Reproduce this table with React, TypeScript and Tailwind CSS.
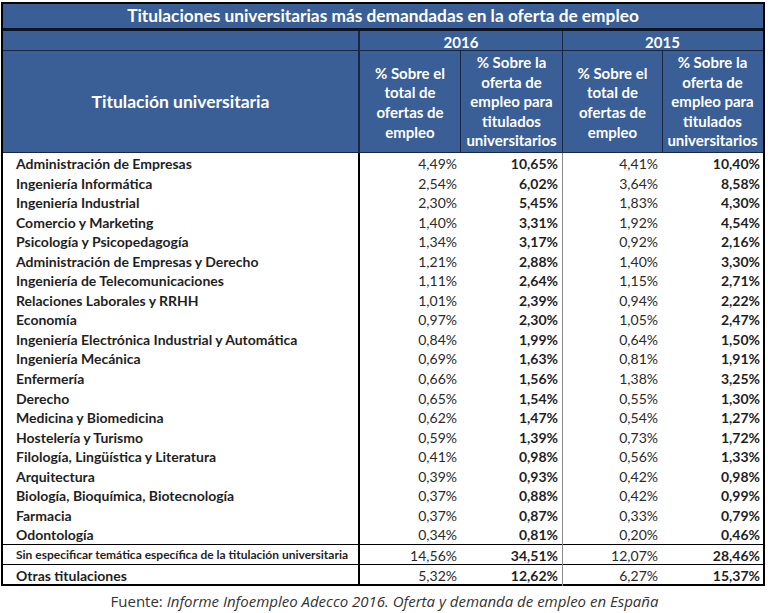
import React from "react";

const rows: [string, string, string, string, string][] = [
  ["Administración de Empresas", "4,49%", "10,65%", "4,41%", "10,40%"],
  ["Ingeniería Informática", "2,54%", "6,02%", "3,64%", "8,58%"],
  ["Ingeniería Industrial", "2,30%", "5,45%", "1,83%", "4,30%"],
  ["Comercio y Marketing", "1,40%", "3,31%", "1,92%", "4,54%"],
  ["Psicología y Psicopedagogía", "1,34%", "3,17%", "0,92%", "2,16%"],
  ["Administración de Empresas y Derecho", "1,21%", "2,88%", "1,40%", "3,30%"],
  ["Ingeniería de Telecomunicaciones", "1,11%", "2,64%", "1,15%", "2,71%"],
  ["Relaciones Laborales y RRHH", "1,01%", "2,39%", "0,94%", "2,22%"],
  ["Economía", "0,97%", "2,30%", "1,05%", "2,47%"],
  ["Ingeniería Electrónica Industrial y Automática", "0,84%", "1,99%", "0,64%", "1,50%"],
  ["Ingeniería Mecánica", "0,69%", "1,63%", "0,81%", "1,91%"],
  ["Enfermería", "0,66%", "1,56%", "1,38%", "3,25%"],
  ["Derecho", "0,65%", "1,54%", "0,55%", "1,30%"],
  ["Medicina y Biomedicina", "0,62%", "1,47%", "0,54%", "1,27%"],
  ["Hostelería y Turismo", "0,59%", "1,39%", "0,73%", "1,72%"],
  ["Filología, Lingüística y Literatura", "0,41%", "0,98%", "0,56%", "1,33%"],
  ["Arquitectura", "0,39%", "0,93%", "0,42%", "0,98%"],
  ["Biología, Bioquímica, Biotecnología", "0,37%", "0,88%", "0,42%", "0,99%"],
  ["Farmacia", "0,37%", "0,87%", "0,33%", "0,79%"],
  ["Odontología", "0,34%", "0,81%", "0,20%", "0,46%"],
];

const font = { fontFamily: "Lato, 'Open Sans', sans-serif" };

function SubHead({ lines }: { lines: string[] }) {
  return (
    <div className="flex flex-col items-center justify-center text-white font-bold text-[15px] leading-[19.6px] text-center h-full">
      {lines.map((l, i) => (
        <span key={i}>{l}</span>
      ))}
    </div>
  );
}

function Nums({ a, b, c, d }: { a: string; b: string; c: string; d: string }) {
  return (
    <>
      <div className="h-full bg-black" />
      <div className="text-right pr-[4px] text-[#2a2a2a]">{a}</div>
      <div className="text-right pr-[4px] font-bold">{b}</div>
      <div className="h-full bg-[#8a8a8a]" />
      <div className="text-right pr-[4px] text-[#2a2a2a]">{c}</div>
      <div className="text-right pr-[2px] font-bold">{d}</div>
    </>
  );
}

export default function App() {
  return (
    <div className="w-[768px] h-[613px] bg-white relative" style={font}>
      <div className="ml-[1px] pt-[2px]">
        <div className="w-[764px] border-[2px] border-black">
          {/* title */}
          <div className="h-[27px] bg-[#3a5e96] flex items-center justify-center text-white font-bold text-[17.3px] border-b-[3px] border-[#0d1524]">
            Titulaciones universitarias más demandadas en la oferta de empleo
          </div>
          {/* year row */}
          <div className="grid grid-cols-[355px_2px_202px_1px_199px] h-[20px] bg-[#3a5e96] border-b border-[#1b2740] text-white font-bold text-[15px]">
            <div />
            <div className="bg-[#1b2740]" />
            <div className="flex items-center justify-center">2016</div>
            <div className="bg-[#1b2740]" />
            <div className="flex items-center justify-center">2015</div>
          </div>
          {/* header */}
          <div className="grid grid-cols-[355px_2px_100px_1px_101px_1px_99px_1px_99px] h-[102px] bg-[#3a5e96] border-b border-[#1b2740]">
            <div className="flex items-center justify-center text-white font-bold text-[17.5px] pt-[2px]">
              Titulación universitaria
            </div>
            <div className="bg-[#1b2740]" />
            <div className="pt-[3px]"><SubHead lines={["% Sobre el", "total de", "ofertas de", "empleo"]} /></div>
            <div className="bg-[#1b2740]" />
            <div className="pt-[1px]"><SubHead lines={["% Sobre la", "oferta de", "empleo para", "titulados", "universitarios"]} /></div>
            <div className="bg-[#1b2740]" />
            <div className="pt-[3px]"><SubHead lines={["% Sobre el", "total de", "ofertas de", "empleo"]} /></div>
            <div className="bg-[#1b2740]" />
            <div className="pt-[1px]"><SubHead lines={["% Sobre la", "oferta de", "empleo para", "titulados", "universitarios"]} /></div>
          </div>
          {/* data */}
          <div>
            {rows.map((r, i) => (
              <div
                key={i}
                className="grid grid-cols-[355px_2px_101px_101px_1px_99px_100px] h-[19.55px] items-center text-[14px] text-[#1f1f1f]"
              >
                <div className="pl-[13px] font-bold whitespace-nowrap">{r[0]}</div>
                <Nums a={r[1]} b={r[2]} c={r[3]} d={r[4]} />
              </div>
            ))}
          </div>
          <div className="border-t border-black grid grid-cols-[355px_2px_101px_101px_1px_99px_100px] h-[20px] items-center text-[14px] text-[#1f1f1f]">
            <div className="pl-[13px] font-bold text-[12px] whitespace-nowrap">
              Sin especificar temática específica de la titulación universitaria
            </div>
            <Nums a="14,56%" b="34,51%" c="12,07%" d="28,46%" />
          </div>
          <div className="border-t border-black grid grid-cols-[355px_2px_101px_101px_1px_99px_100px] h-[20px] items-center text-[14px] text-[#1f1f1f]">
            <div className="pl-[13px] font-bold">Otras titulaciones</div>
            <Nums a="5,32%" b="12,62%" c="6,27%" d="15,37%" />
          </div>
        </div>
        <div
          className="text-center text-[15px] text-[#333] mt-[4px]"
          style={{ fontFamily: "'Open Sans', sans-serif" }}
        >
          Fuente: <span className="italic">Informe Infoempleo Adecco 2016. Oferta y demanda de empleo en España</span>
        </div>
      </div>
    </div>
  );
}
